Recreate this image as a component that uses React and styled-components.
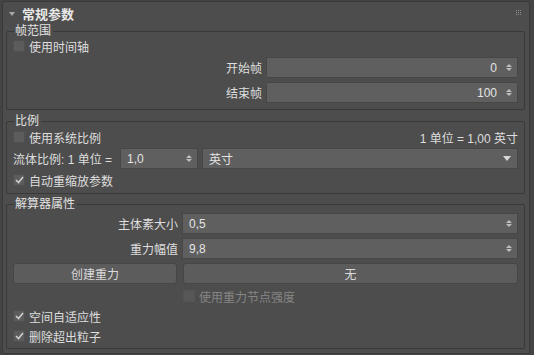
import styled, { createGlobalStyle } from "styled-components";

const GlobalStyle = createGlobalStyle`
    html, body {
        margin: 0;
        padding: 0;
        background: #444444;
    }
    body {
        font-family: "Liberation Sans", "Noto Sans CJK SC", sans-serif;
        font-size: 12px;
        color: #dedede;
    }
`;

const Page = styled.div`
    width: 534px;
    height: 355px;
    padding: 1px 4px 0 2px;
    box-sizing: border-box;
`;

const Panel = styled.div`
    background: #4d4d4d;
    border: 1px solid #3a3a3a;
    border-radius: 2px;
    padding: 0 4px 2px 3px;
    height: 353px;
    box-sizing: border-box;
`;

const Header = styled.div`
    display: flex;
    align-items: center;
    height: 22px;
    padding-left: 3px;
`;

const Caret = styled.span`
    width: 0;
    height: 0;
    border-left: 3px solid transparent;
    border-right: 3px solid transparent;
    border-top: 4px solid #a8a8a8;
    margin-right: 7px;
    margin-top: 1px;
`;

const HeaderTitle = styled.span`
    font-weight: bold;
    font-size: 13px;
    color: #e8e8e8;
    flex: 1;
`;

const Grip = styled.svg`
    margin-right: 3px;
`;

const Group = styled.fieldset`
    margin: ${p => p.top || 0}px 0 0 0;
    border: 1px solid #393939;
    border-radius: 2px;
    padding: ${p => p.padTop || 0}px 6px ${p => p.padBottom || 6}px 6px;
    display: flex;
    flex-direction: column;
    gap: ${p => p.gap || 4}px;
`;

const Legend = styled.legend`
    padding: 0 2px 0 1px;
    margin-left: 1px;
    line-height: 14px;
    height: 14px;
    color: #e2e2e2;
`;

const Row = styled.div`
    display: flex;
    align-items: center;
    height: ${p => p.h || 21}px;
    gap: ${p => p.gap ?? 4}px;
    justify-content: ${p => p.justify || "flex-start"};
    margin-top: ${p => p.shift || 0}px;
`;

const Label = styled.span`
    width: ${p => p.w}px;
    text-align: ${p => p.left ? "left" : "right"};
    flex: none;
    white-space: nowrap;
`;

const Check = styled.span`
    width: 10px;
    height: 10px;
    background: #5c5c5c;
    border: 1px solid ${p => p.disabled ? "#575757" : "#505050"};
    opacity: ${p => p.disabled ? 0.7 : 1};
    display: inline-flex;
    align-items: center;
    justify-content: center;
    flex: none;
`;

const CheckText = styled.span`
    margin-left: 4px;
    color: ${p => p.disabled ? "#858585" : "#dedede"};
    white-space: nowrap;
`;

const CheckRow = styled.label`
    display: flex;
    align-items: center;
    height: 16px;
    padding-left: ${p => p.indent || 0}px;
`;

const Field = styled.div`
    flex: ${p => p.w ? "none" : 1};
    width: ${p => p.w ? `${p.w}px` : "auto"};
    height: 100%;
    box-sizing: border-box;
    background: #5f5f5f;
    border: 1px solid #474747;
    display: flex;
    align-items: center;
    padding: 0 5px 0 6px;
    color: #e4e4e4;
`;

const FieldText = styled.span`
    flex: 1;
    text-align: ${p => p.right ? "right" : "left"};
    padding-right: ${p => p.right ? 9 : 0}px;
`;

const Spinner = styled.span`
    display: flex;
    flex-direction: column;
    gap: 1px;
    &::before, &::after {
        content: "";
        width: 0;
        height: 0;
        border-left: 3px solid transparent;
        border-right: 3px solid transparent;
    }
    &::before { border-bottom: 3px solid #bdbdbd; }
    &::after { border-top: 3px solid #bdbdbd; }
`;

const DropArrow = styled.span`
    width: 0;
    height: 0;
    border-left: 4px solid transparent;
    border-right: 4px solid transparent;
    border-top: 5px solid #d8d8d8;
    margin-right: 1px;
`;

const Button = styled.div`
    flex: ${p => p.w ? "none" : 1};
    width: ${p => p.w ? `${p.w}px` : "auto"};
    height: 100%;
    box-sizing: border-box;
    background: #5c5c5c;
    border: 1px solid #464646;
    border-radius: 3px;
    display: flex;
    align-items: center;
    justify-content: center;
    color: #dadada;
`;

const Tick = () => (
    <svg width="9" height="8" viewBox="0 0 9 8">
        <path d="M1 4 L3.5 6.5 L8 1" stroke="#cfcfcf" strokeWidth="1.6" fill="none" />
    </svg>
);

function CheckBox({ label, checked, disabled, indent }) {
    return (
        <CheckRow indent={indent}>
            <Check disabled={disabled}>{checked && <Tick />}</Check>
            <CheckText disabled={disabled}>{label}</CheckText>
        </CheckRow>
    );
}

function SpinField({ value, right, w }) {
    return (
        <Field w={w}>
            <FieldText right={right}>{value}</FieldText>
            <Spinner />
        </Field>
    );
}

export default function App() {
    return (
        <Page>
            <GlobalStyle />
            <Panel>
                <Header>
                    <Caret />
                    <HeaderTitle>常规参数</HeaderTitle>
                    <Grip width="6" height="6" viewBox="0 0 6 6">
                        {[0, 2, 4].map(y => [0, 2, 4].map(x => (
                            <rect key={`${x}-${y}`} x={x} y={y} width="1" height="1" fill="#8a8a8a" />
                        )))}
                    </Grip>
                </Header>

                <Group padBottom={6}>
                    <Legend>帧范围</Legend>
                    <CheckBox label="使用时间轴" />
                    <Row shift={-1}>
                        <Label w={249}>开始帧</Label>
                        <SpinField value="0" right />
                    </Row>
                    <Row>
                        <Label w={249}>结束帧</Label>
                        <SpinField value="100" right />
                    </Row>
                </Group>

                <Group top={4} padTop={1} padBottom={5} gap={3}>
                    <Legend>比例</Legend>
                    <Row h={16} justify="space-between" gap={0}>
                        <CheckBox label="使用系统比例" />
                        <span>1 单位 = 1,00 英寸</span>
                    </Row>
                    <Row h={21}>
                        <Label w={103} left>流体比例: 1 单位 =</Label>
                        <SpinField value="1,0" w={78} />
                        <Field>
                            <FieldText>英寸</FieldText>
                            <DropArrow />
                        </Field>
                    </Row>
                    <CheckBox label="自动重缩放参数" checked />
                </Group>

                <Group top={3} padTop={2} padBottom={4}>
                    <Legend>解算器属性</Legend>
                    <Row>
                        <Label w={165}>主体素大小</Label>
                        <SpinField value="0,5" />
                    </Row>
                    <Row>
                        <Label w={165}>重力幅值</Label>
                        <SpinField value="9,8" />
                    </Row>
                    <Row h={21} gap={6}>
                        <Button w={164}>创建重力</Button>
                        <Button>无</Button>
                    </Row>
                    <CheckBox label="使用重力节点强度" disabled indent={170} />
                    <CheckBox label="空间自适应性" checked />
                    <CheckBox label="删除超出粒子" checked />
                </Group>
            </Panel>
        </Page>
    );
}
